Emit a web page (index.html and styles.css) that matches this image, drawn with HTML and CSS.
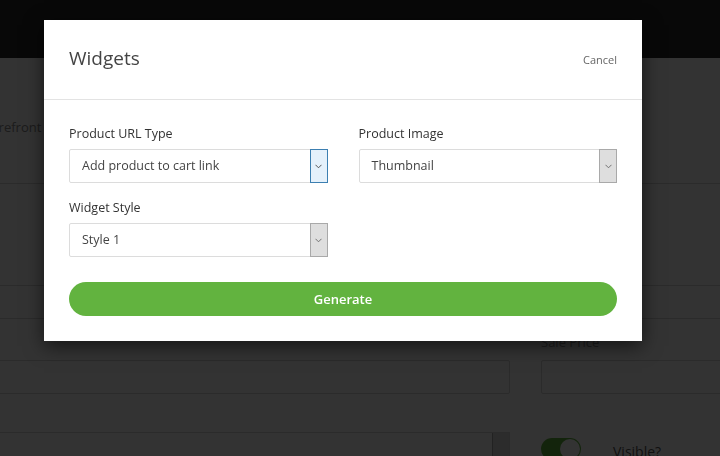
FILE: index.html
```html
<!DOCTYPE html>
<html lang="en">
<head>
    <meta charset="UTF-8">
    <title>Widgets</title>
    <link rel="stylesheet" href="styles.css">
</head>
<body>
    <div class="page">
        <div class="topbar"></div>
        <div class="content">
            <div class="page-label">Storefront Name</div>
            <div class="page-rule"></div>
            <div class="page-input wide"></div>
            <div class="page-grid">
                <div class="page-field">
                    <div class="page-input"></div>
                </div>
                <div class="page-field">
                    <div class="page-label small">Sale Price</div>
                    <div class="page-input"></div>
                </div>
                <div class="page-field">
                    <div class="page-select"><span class="page-arrow"></span></div>
                </div>
                <div class="page-field toggle-row">
                    <span class="toggle"><span class="knob"></span></span>
                    <span class="toggle-text">Visible?</span>
                </div>
            </div>
        </div>
    </div>

    <div class="overlay"></div>

    <div class="modal">
        <div class="modal-header">
            <h2>Widgets</h2>
            <a href="#" class="cancel">Cancel</a>
        </div>
        <div class="modal-body">
            <div class="form-grid">
                <div class="field">
                    <label>Product URL Type</label>
                    <div class="select focused">
                        <span class="value">Add product to cart link</span>
                        <span class="arrow"><svg width="7" height="5" viewBox="0 0 7 5"><path d="M0.5 0.8 L3.5 3.8 L6.5 0.8" fill="none" stroke="#444" stroke-width="0.9"/></svg></span>
                    </div>
                </div>
                <div class="field">
                    <label>Product Image</label>
                    <div class="select">
                        <span class="value">Thumbnail</span>
                        <span class="arrow"><svg width="7" height="5" viewBox="0 0 7 5"><path d="M0.5 0.8 L3.5 3.8 L6.5 0.8" fill="none" stroke="#666" stroke-width="0.9"/></svg></span>
                    </div>
                </div>
                <div class="field">
                    <label>Widget Style</label>
                    <div class="select">
                        <span class="value">Style 1</span>
                        <span class="arrow"><svg width="7" height="5" viewBox="0 0 7 5"><path d="M0.5 0.8 L3.5 3.8 L6.5 0.8" fill="none" stroke="#666" stroke-width="0.9"/></svg></span>
                    </div>
                </div>
            </div>
            <button class="generate">Generate</button>
        </div>
    </div>
</body>
</html>
```

FILE: styles.css
```css
body {
    margin: 0;
    padding: 0;
    background-color: #ffffff;
    font-family: "Open Sans", "Noto Sans", sans-serif;
    overflow: hidden;
    height: 456px;
}

/* page behind the dialog */
.topbar {
    height: 58px;
    background-color: #282828;
}

.content {
    margin-left: -21px;
    width: 760px;
}

.page-label {
    padding-top: 61px;
    font-size: 13px;
    line-height: 16px;
    color: #8a8a8a;
}

.page-rule {
    margin-top: 48px;
    border-top: 1px solid #d4d4d4;
}

.page-input {
    height: 32px;
    border: 1px solid #d4d4d4;
    border-radius: 2px;
}

.page-input.wide {
    margin-top: 101px;
}

.page-grid {
    display: grid;
    grid-template-columns: 531px 1fr;
    column-gap: 31px;
    margin-top: 7px;
}

.page-field {
    padding-top: 34px;
}

.page-label.small {
    padding-top: 0;
    margin-top: -26px;
    margin-bottom: 10px;
    color: #999;
}

.page-select {
    height: 32px;
    border: 1px solid #d4d4d4;
    display: flex;
    justify-content: flex-end;
    margin-top: 4px;
}

.page-arrow {
    width: 16px;
    background-color: #dcdcdc;
    border-left: 1px solid #aaa;
}

.toggle-row {
    display: flex;
    align-items: center;
    gap: 32px;
    padding-top: 37px;
}

.toggle {
    width: 40px;
    height: 22px;
    border-radius: 11px;
    background-color: #62b33f;
    display: flex;
    justify-content: flex-end;
    align-items: center;
    padding: 0 1px;
    box-sizing: border-box;
}

.knob {
    width: 20px;
    height: 20px;
    border-radius: 50%;
    background-color: #ffffff;
}

.toggle-text {
    font-size: 14px;
    color: #555;
    margin-top: 6px;
}

.overlay {
    position: fixed;
    inset: 0;
    background-color: rgba(0, 0, 0, 0.8);
}

/* dialog */
.modal {
    position: absolute;
    top: 20px;
    left: 44px;
    width: 598px;
    background-color: #ffffff;
    box-shadow: 0 5px 18px rgba(0, 0, 0, 0.6);
}

.modal-header {
    height: 79px;
    display: flex;
    align-items: center;
    justify-content: space-between;
    padding: 0 25px;
    border-bottom: 1px solid #e3e3e3;
}

.modal-header h2 {
    margin: 0;
    margin-top: -3px;
    font-size: 19px;
    font-weight: 400;
    color: #444;
}

.cancel {
    font-size: 11px;
    color: #666;
    text-decoration: none;
}

.modal-body {
    padding: 26px 25px 25px;
}

.form-grid {
    display: grid;
    grid-template-columns: 1fr 1fr;
    column-gap: 31px;
    row-gap: 17px;
}

.field label {
    display: block;
    font-size: 12.5px;
    line-height: 16px;
    font-weight: 500;
    color: #333;
    margin-bottom: 7px;
}

.select {
    height: 34px;
    box-sizing: border-box;
    border: 1px solid #dcdcdc;
    border-radius: 2px;
    display: flex;
    align-items: stretch;
}

.select .value {
    flex: 1;
    padding-left: 12px;
    font-size: 12.5px;
    line-height: 32px;
    color: #444;
}

.select .arrow {
    width: 16px;
    margin: -1px -1px -1px 0;
    background-color: #dedede;
    border: 1px solid #a9a9a9;
    display: flex;
    align-items: center;
    justify-content: center;
}

.select.focused .arrow {
    background-color: #e5f1fb;
    border-color: #3c7fb1;
}

.generate {
    display: block;
    width: 100%;
    height: 34px;
    margin-top: 25px;
    border: none;
    border-radius: 17px;
    background-color: #62b33f;
    color: #ffffff;
    font-family: inherit;
    font-size: 13px;
    font-weight: 600;
    cursor: pointer;
}
```
